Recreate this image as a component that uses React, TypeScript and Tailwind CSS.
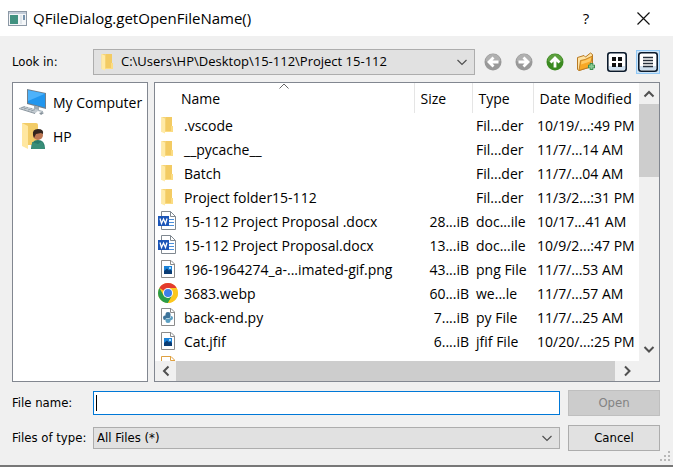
import type { ReactNode } from "react";

const UI = "font-['Open_Sans','Noto_Sans',sans-serif]";
const LABEL = "font-['DejaVu_Sans_Condensed','DejaVu_Sans',sans-serif] text-[13px]";

type Kind = "folder" | "word" | "image" | "chrome" | "python" | "other";

interface Entry {
  name: string;
  kind: Kind;
  size: string;
  type: string;
  date: string;
}

const entries: Entry[] = [
  { name: ".vscode", kind: "folder", size: "", type: "Fil...der", date: "10/19/...:49 PM" },
  { name: "__pycache__", kind: "folder", size: "", type: "Fil...der", date: "11/7/...14 AM" },
  { name: "Batch", kind: "folder", size: "", type: "Fil...der", date: "11/7/...04 AM" },
  { name: "Project folder15-112", kind: "folder", size: "", type: "Fil...der", date: "11/3/2...:31 PM" },
  { name: "15-112 Project Proposal .docx", kind: "word", size: "28...iB", type: "doc...ile", date: "10/17...41 AM" },
  { name: "15-112 Project Proposal.docx", kind: "word", size: "13...iB", type: "doc...ile", date: "10/9/2...:47 PM" },
  { name: "196-1964274_a-...imated-gif.png", kind: "image", size: "43...iB", type: "png File", date: "11/7/...53 AM" },
  { name: "3683.webp", kind: "chrome", size: "60...iB", type: "we...le", date: "11/7/...57 AM" },
  { name: "back-end.py", kind: "python", size: "7....iB", type: "py File", date: "11/7/...25 AM" },
  { name: "Cat.jfif", kind: "image", size: "6....iB", type: "jfif File", date: "10/20/...:25 PM" },
  { name: "", kind: "other", size: "", type: "", date: "" },
];

function Folder() {
  return (
    <svg width="20" height="20" viewBox="0 0 20 20" aria-hidden="true">
      <path d="M3.500 2H11v15H3.500z" fill="#f5d477" />
      <path d="M8 2h6v14H8z" fill="#f3cb63" />
      <path d="M3.500 2l3.500 1.500v15L3.500 17z" fill="#ffeaa6" />
      <path d="M13 11h2v6H7v-1h6z" fill="#fbdc83" />
    </svg>
  );
}

function FileIcon({ kind }: { kind: Kind }) {
  if (kind === "folder") return <Folder />;
  if (kind === "word")
    return (
      <svg width="20" height="20" viewBox="0 0 20 20" aria-hidden="true">
        <path d="M3.500 .5h9l5 5v13h-14z" fill="#fff" stroke="#808890" />
        <path d="M12.500 .5v5h5" fill="none" stroke="#808890" />
        <path d="M11 8.500h5M11 11.500h5M11 14.500h5" stroke="#4b8fdb" />
        <path d="M0 5h11v10H0z" fill="#1c56b8" />
        <path d="M2 7.500l1.500 5 2-4.500 2 4.500L9 7.500" fill="none" stroke="#fff" strokeWidth="1.300" />
      </svg>
    );
  if (kind === "chrome")
    return (
      <svg width="20" height="20" viewBox="0 0 20 20" aria-hidden="true">
        <circle cx="10" cy="10" r="10" fill="#fcc71e" />
        <path d="M10 10L1.340 5A10 10 0 0 1 18.660 5H10z" fill="#e33b2e" />
        <path d="M1.340 5A10 10 0 0 0 10 20l4.300-7.500L10 10 5.700 12.500z" fill="#2a9d48" />
        <path d="M10 5h8.660A10 10 0 0 1 10 20l4.300-7.500z" fill="#fcc71e" />
        <circle cx="10" cy="10" r="5" fill="#fff" />
        <circle cx="10" cy="10" r="4" fill="#3f7fe8" />
      </svg>
    );
  const edge = kind === "other" ? "#dfa142" : "#8b8b8b";
  return (
    <svg width="20" height="20" viewBox="0 0 20 20" aria-hidden="true">
      <path d="M3.500 1.500H13l3.500 3.500v13.500h-13z" fill="#fff" stroke={edge} />
      <path d="M12.500 1.500v4h4" fill="none" stroke={edge} />
      {kind === "image" && (
        <>
          <path d="M6 7h8v8H6z" fill="#1c83d8" />
          <path d="M6 15v-3l3-2.500 2 2 1.500-1 1.500 1.500v3z" fill="#0b3d74" />
          <path d="M11 8h2v2h-2z" fill="#a8dcff" />
        </>
      )}
      {kind === "python" && (
        <>
          <path
            d="M7.500 8.500V7q0-2 2.500-2t2.500 2v2.500q0 1.500-1.500 1.500H9q-1.500 0-1.500 2H7q-2 0-2-2.200T7 8.500h3"
            fill="#3d7399"
          />
          <path
            d="M13 9q2 0 2 2t-2 2.300h-3h2.500V14q0 2-2.500 2t-2.500-2v-1.500Q7.500 11.500 9 11.500h2q2 0 2-2z"
            fill="#5b9fc2"
          />
        </>
      )}
    </svg>
  );
}

function Chevron({ dir, heavy = false }: { dir: "up" | "down" | "left" | "right"; heavy?: boolean }) {
  const d = {
    up: "M1.500 8.500L6 4l4.500 4.500",
    down: "M1.500 4L6 8.500 10.500 4",
    left: "M8.500 1.500L4 6l4.500 4.500",
    right: "M4 1.500L8.500 6 4 10.500",
  }[dir];
  return (
    <svg width="12" height="12" viewBox="0 0 12 12" aria-hidden="true">
      <path d={d} fill="none" stroke="#505050" strokeWidth={heavy ? 2 : 1.2} />
    </svg>
  );
}

function RoundArrow({ turn, green = false }: { turn: number; green?: boolean }) {
  return (
    <svg width="18" height="18" viewBox="0 0 18 18" aria-hidden="true">
      <circle cx="9" cy="9" r="8.500" fill={green ? "#3b8a21" : "#999"} />
      <path d="M1.500 8a7.500 7 0 0 1 15 0q-7 3-15 0z" fill={green ? "#5c9f3e" : "#b0b0b0"} />
      <g transform={`rotate(${turn} 9 9)`}>
        <path d="M9 14.500V5M4.500 9.500L9 5l4.500 4.500" fill="none" stroke="#fff" strokeWidth="2.800" />
      </g>
    </svg>
  );
}

function ToolButton({ label, children, pressed = false }: { label: string; children: ReactNode; pressed?: boolean }) {
  return (
    <button
      type="button"
      aria-label={label}
      className={`flex h-6 w-6 shrink-0 items-center justify-center ${pressed ? "border border-[#90c8f6] bg-[#cce4f7]" : ""}`}
    >
      {children}
    </button>
  );
}

function NewFolder() {
  return (
    <svg width="20" height="20" viewBox="0 0 20 20" aria-hidden="true">
      <path d="M1.500 5.500L8 3.500l1.500 1.500L14.500 1l2 1.500v12L3 18.500l-1.500-1z" fill="#ffe3a3" stroke="#b87922" />
      <path d="M3 18.500L4.500 8.500l4.500-1L16.500 4 14 15z" fill="#f9a825" stroke="#b87922" strokeWidth=".8" />
      <path d="M5.500 9.300l4-1 5.800-2.800-1 4L5 12.500z" fill="#ffca63" />
      <path d="M15.500 11v7M12 14.500h7" stroke="#3e8d4f" strokeWidth="3.600" />
      <path d="M15.500 12v5M13 14.500h5" stroke="#8bcb95" strokeWidth="1.800" />
    </svg>
  );
}

function ViewIcon({ list = false }: { list?: boolean }) {
  return (
    <svg width="20" height="20" viewBox="0 0 20 20" className="shrink-0" aria-hidden="true">
      <rect x=".8" y=".8" width="18.400" height="18.400" rx="2.500" fill="#fff" stroke="#0b1a2c" strokeWidth="1.600" />
      <path d="M2 14h16v4H2z" fill="#cfe0ef" />
      {list ? (
        <path d="M5 5.500h10M5 8.500h10M5 11.500h10M5 14.500h10" stroke="#26303c" strokeWidth="1.400" />
      ) : (
        <path d="M5 5h4v4H5zM11 5h4v4h-4zM5 11h4v4H5zM11 11h4v4h-4z" fill="#111" />
      )}
    </svg>
  );
}

function Computer() {
  return (
    <svg width="28" height="28" viewBox="0 0 28 28" aria-hidden="true">
      <path d="M8 1l19 4v16L8 16z" fill="#707f8c" />
      <path d="M9 2.200l17 3.600v13.700L9 15z" fill="#2196ee" />
      <path d="M9 2.200l17 3.600L9 13z" fill="#4db2fa" />
      <path d="M15 17.500l5 1.500v3l4 1v1l-11-2 2-1z" fill="#9eabb4" />
      <path d="M0 20l5-2 15 4-4 3.500z" fill="#c3cbd1" />
      <path d="M2 20l4-1.300M5 21l4-1.500M9 22l4-1.500M12 23l4-1.400" stroke="#87939c" strokeWidth=".8" />
      <path d="M0 20v1l16 5v-1zM20 25l3-1 2 1-3 2z" fill="#87939c" />
    </svg>
  );
}

function UserFolder() {
  return (
    <svg width="28" height="28" viewBox="0 0 28 28" aria-hidden="true">
      <path d="M3 1h14q2 0 2 2v20H3z" fill="#f2cc68" />
      <path d="M3 1l6 3v23l-6-3z" fill="#ffe7a0" />
      <path d="M12 27q0-9 7-9 7 0 7 9z" fill="#28796a" />
      <circle cx="19" cy="13" r="5" fill="#bd7854" />
      <path d="M14 13q-1-6 5-6t5 5l-2-1-5 1-2 4z" fill="#33261f" />
      <path d="M13 20l6 2 4-3 3 8H13z" fill="#388e78" />
    </svg>
  );
}

export default function App() {
  return (
    <div className={`${UI} flex h-screen flex-col overflow-hidden border-b-2 border-[#777] bg-[#f0f0f0] text-black`}>
      <header className="flex h-9 shrink-0 items-center bg-white pl-2 pr-[18px]">
        <svg width="19" height="15" viewBox="0 0 19 15" aria-hidden="true">
          <rect x=".5" y=".5" width="18" height="14" fill="#f4f6f8" stroke="#8c98a5" />
          <path d="M1 1h17v2H1z" fill="#c2ccd8" />
          <path d="M2 4h8v9H2z" fill="#419180" />
          <path d="M12 4h2v9h-2z" fill="#dfe5ea" />
          <path d="M15 4h2v5h-2z" fill="#7592ac" />
        </svg>
        <h1 className="ml-1.5 flex-1 text-[15px] leading-5">QFileDialog.getOpenFileName()</h1>
        <button type="button" aria-label="Help" className="w-6 text-[15px] leading-5">
          ?
        </button>
        <button type="button" aria-label="Close" className="ml-[33px] flex w-6 justify-center">
          <svg width="13" height="13" viewBox="0 0 13 13" aria-hidden="true">
            <path d="M.5 .5l12 12M12.500 .5l-12 12" stroke="#111" strokeWidth="1.200" />
          </svg>
        </button>
      </header>

      <main className="flex min-h-0 flex-1 flex-col pl-3 pr-[13px]">
        <div className="flex h-[46px] shrink-0 items-center pt-1.5">
          <label htmlFor="look-in" className={`${LABEL} w-[81px] shrink-0`}>
            Look in:
          </label>
          <div className="relative flex h-[26px] min-w-0 flex-1 items-center border border-[#adadad] bg-[#e1e1e1] pl-1">
            <Folder />
            <select id="look-in" className="h-full min-w-0 flex-1 appearance-none bg-transparent pl-[3px] text-[13px]">
              <option>C:\Users\HP\Desktop\15-112\Project 15-112</option>
            </select>
            <span className="pointer-events-none absolute right-1.5">
              <Chevron dir="down" />
            </span>
          </div>
          <div className="ml-1.5 flex gap-[7px]">
            <ToolButton label="Back">
              <RoundArrow turn={-90} />
            </ToolButton>
            <ToolButton label="Forward">
              <RoundArrow turn={90} />
            </ToolButton>
            <ToolButton label="Parent directory">
              <RoundArrow turn={0} green />
            </ToolButton>
            <ToolButton label="Create new folder">
              <NewFolder />
            </ToolButton>
            <ToolButton label="List view">
              <ViewIcon />
            </ToolButton>
            <ToolButton label="Detail view" pressed>
              <ViewIcon list />
            </ToolButton>
          </div>
        </div>

        <div className="flex min-h-0 flex-1 gap-1.5">
          <nav aria-label="Places" className="w-[136px] shrink-0 border border-[#828790] bg-white pl-1.5 pt-0.5">
            <ul className="text-[14px]">
              <li>
                <button type="button" className="flex h-[34px] items-center gap-1.5 whitespace-nowrap">
                  <Computer />
                  My Computer
                </button>
              </li>
              <li>
                <button type="button" className="flex h-[34px] items-center gap-1.5">
                  <UserFolder />
                  HP
                </button>
              </li>
            </ul>
          </nav>

          <section aria-label="Files" className="flex min-w-0 flex-1 flex-col border border-[#828790] bg-white">
            <div className="flex min-h-0 flex-1">
              <div className="min-w-0 flex-1 overflow-hidden">
                <table className="w-full table-fixed border-collapse whitespace-nowrap text-[14px]">
                  <colgroup>
                    <col />
                    <col className="w-[58px]" />
                    <col className="w-[61px]" />
                    <col className="w-[106px]" />
                  </colgroup>
                  <thead>
                    <tr className="h-[30px] text-left">
                      <th className="relative border-r border-[#e5e5e5] p-0 pl-[26px] font-normal">
                        <span className="absolute inset-x-0 top-0 flex justify-center">
                          <svg width="10" height="6" viewBox="0 0 10 6" aria-hidden="true">
                            <path d="M.5 5.500L5 1l4.500 4.500" fill="none" stroke="#666" />
                          </svg>
                        </span>
                        Name
                      </th>
                      <th className="border-r border-[#e5e5e5] p-0 pl-1.5 font-normal">Size</th>
                      <th className="border-r border-[#e5e5e5] p-0 pl-1.5 font-normal">Type</th>
                      <th className="p-0 pl-1.5 font-normal">Date Modified</th>
                    </tr>
                  </thead>
                  <tbody>
                    {entries.map((e, i) => (
                      <tr key={i} className="h-6">
                        <td className="p-0 pl-[3px]">
                          <span className="flex h-6 items-center gap-1.5">
                            <FileIcon kind={e.kind} />
                            {e.name}
                          </span>
                        </td>
                        <td className="p-0 pr-[3px] text-right">{e.size}</td>
                        <td className="p-0 pl-1">{e.type}</td>
                        <td className="p-0 pl-1">{e.date}</td>
                      </tr>
                    ))}
                  </tbody>
                </table>
              </div>
              <div className="flex w-5 shrink-0 flex-col bg-[#f0f0f0]">
                <button type="button" aria-label="Scroll up" className="flex h-[21px] items-center justify-center">
                  <Chevron dir="up" heavy />
                </button>
                <div className="flex-1">
                  <div className="h-[73px] bg-[#cdcdcd]" />
                </div>
                <button type="button" aria-label="Scroll down" className="flex h-6 items-center justify-center">
                  <Chevron dir="down" heavy />
                </button>
              </div>
            </div>
            <div className="flex h-5 shrink-0 bg-[#f0f0f0] pr-5">
              <button type="button" aria-label="Scroll left" className="flex w-[21px] items-center justify-center">
                <Chevron dir="left" heavy />
              </button>
              <div className="flex-1 bg-[#cdcdcd]" />
              <button type="button" aria-label="Scroll right" className="flex w-6 items-center justify-center">
                <Chevron dir="right" heavy />
              </button>
            </div>
          </section>
        </div>

        <div className="flex shrink-0 items-center gap-2 pt-2">
          <div className="flex min-w-0 flex-1 items-center">
            <label htmlFor="file-name" className={`${LABEL} w-[81px] shrink-0`}>
              File name:
            </label>
            <div className="flex h-6 min-w-0 flex-1 items-center border border-[#0078d7] bg-white pl-0.5">
              <span className="h-4 w-px bg-black" />
              <input id="file-name" type="text" className={`${LABEL} min-w-0 flex-1 caret-transparent outline-none`} />
            </div>
          </div>
          <button type="button" disabled className={`${LABEL} h-[26px] w-[92px] border border-[#bfbfbf] bg-[#cccccc] text-[#838383]`}>
            Open
          </button>
        </div>

        <div className="flex shrink-0 items-center gap-2 pt-[9px]">
          <div className="flex min-w-0 flex-1 items-center">
            <label htmlFor="file-type" className={`${LABEL} w-[81px] shrink-0`}>
              Files of type:
            </label>
            <div className="relative flex h-[22px] min-w-0 flex-1 items-center border border-[#adadad] bg-[#e1e1e1]">
              <select id="file-type" className={`${LABEL} h-full w-full appearance-none bg-transparent pl-[3px]`}>
                <option>All Files (*)</option>
              </select>
              <span className="pointer-events-none absolute right-1.5">
                <Chevron dir="down" />
              </span>
            </div>
          </div>
          <button type="button" className={`${LABEL} h-[26px] w-[92px] border border-[#adadad] bg-[#e1e1e1]`}>
            Cancel
          </button>
        </div>
      </main>

      <footer className="flex h-3.5 shrink-0 justify-end pr-0.5">
        <svg width="11" height="11" viewBox="0 0 11 11" aria-hidden="true">
          <path d="M8 0h2v2H8zM4 4h2v2H4zM8 4h2v2H8zM0 8h2v2H0zM4 8h2v2H4zM8 8h2v2H8z" fill="#b8b8b8" />
        </svg>
      </footer>
    </div>
  );
}
